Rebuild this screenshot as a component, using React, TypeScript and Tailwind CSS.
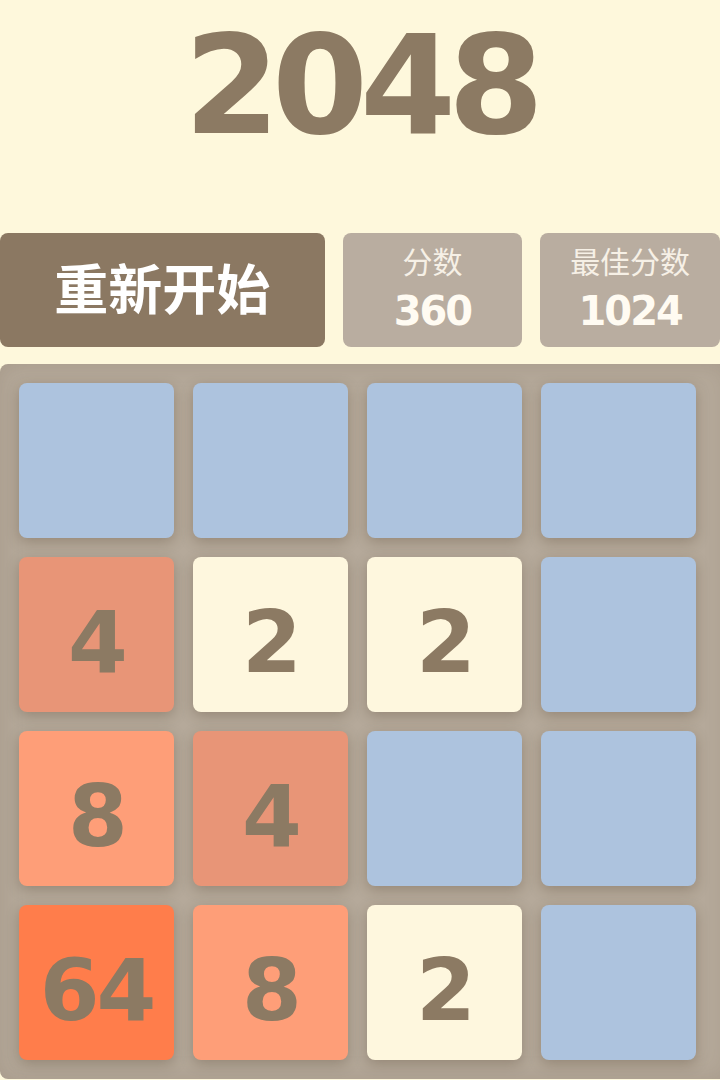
import React from 'react';

type Cell = number | null;

const BOARD: Cell[][] = [
  [null, null, null, null],
  [4, 2, 2, null],
  [8, 4, null, null],
  [64, 8, 2, null],
];

const TILE_STYLES: Record<string, string> = {
  empty: 'bg-[#adc3de]',
  '2': 'bg-[#fef7de]',
  '4': 'bg-[#e89577]',
  '8': 'bg-[#fe9e78]',
  '64': 'bg-[#ff7d4b]',
};

const digitFont = "[font-family:'DejaVu_Sans',sans-serif]";
const cjkFont = "[font-family:'Noto_Sans_CJK_SC',sans-serif]";

function Tile({ value }: { value: Cell }) {
  const tone = value === null ? TILE_STYLES.empty : TILE_STYLES[String(value)];
  return (
    <div
      className={`flex h-[155px] w-[155px] items-center justify-center rounded-[8px] pt-[14px] shadow-[0_4px_14px_rgba(70,50,30,0.28)] ${tone}`}
    >
      {value !== null && (
        <span className={`${digitFont} text-[86px] font-bold leading-none tracking-[-3px] text-[#8c7a63]`}>
          {value}
        </span>
      )}
    </div>
  );
}

function ScoreBox({ label, value }: { label: string; value: number }) {
  return (
    <div className="flex h-[114px] w-[180px] flex-col items-center justify-center rounded-[8px] bg-[#b9ada0]">
      <span className={`${cjkFont} -mt-[4px] text-[30px] leading-none text-[#f6f0e6]`}>{label}</span>
      <span className={`${digitFont} mt-[16px] text-[40px] font-bold leading-none tracking-[-2px] text-[#fffbf2]`}>
        {value}
      </span>
    </div>
  );
}

export default function App() {
  return (
    <div className="h-[1080px] w-[720px] overflow-hidden bg-[#fef8dc]">
      {/* Title */}
      <div className="flex h-[233px] justify-center pt-[17px]">
        <h1 className={`${digitFont} text-[138px] font-bold leading-[1.0] tracking-[-8px] text-[#8c7a63]`}>2048</h1>
      </div>

      {/* Controls */}
      <div className="flex gap-[18px]">
        <button className="flex h-[114px] w-[325px] items-center justify-center rounded-[8px] bg-[#8b7862] pb-[6px]">
          <span className={`${cjkFont} text-[54px] font-bold leading-none text-white`}>重新开始</span>
        </button>
        <ScoreBox label="分数" value={360} />
        <ScoreBox label="最佳分数" value={1024} />
      </div>

      {/* Board */}
      <div className="mt-[17px] w-[728px] rounded-[8px] bg-[#b5a99a] p-[19px] shadow-[inset_0_0_24px_rgba(90,70,50,0.15)]">
        <div className="flex flex-col gap-[19px]">
          {BOARD.map((row, r) => (
            <div key={r} className="flex gap-[19px]">
              {row.map((cell, c) => (
                <Tile key={c} value={cell} />
              ))}
            </div>
          ))}
        </div>
      </div>
    </div>
  );
}
